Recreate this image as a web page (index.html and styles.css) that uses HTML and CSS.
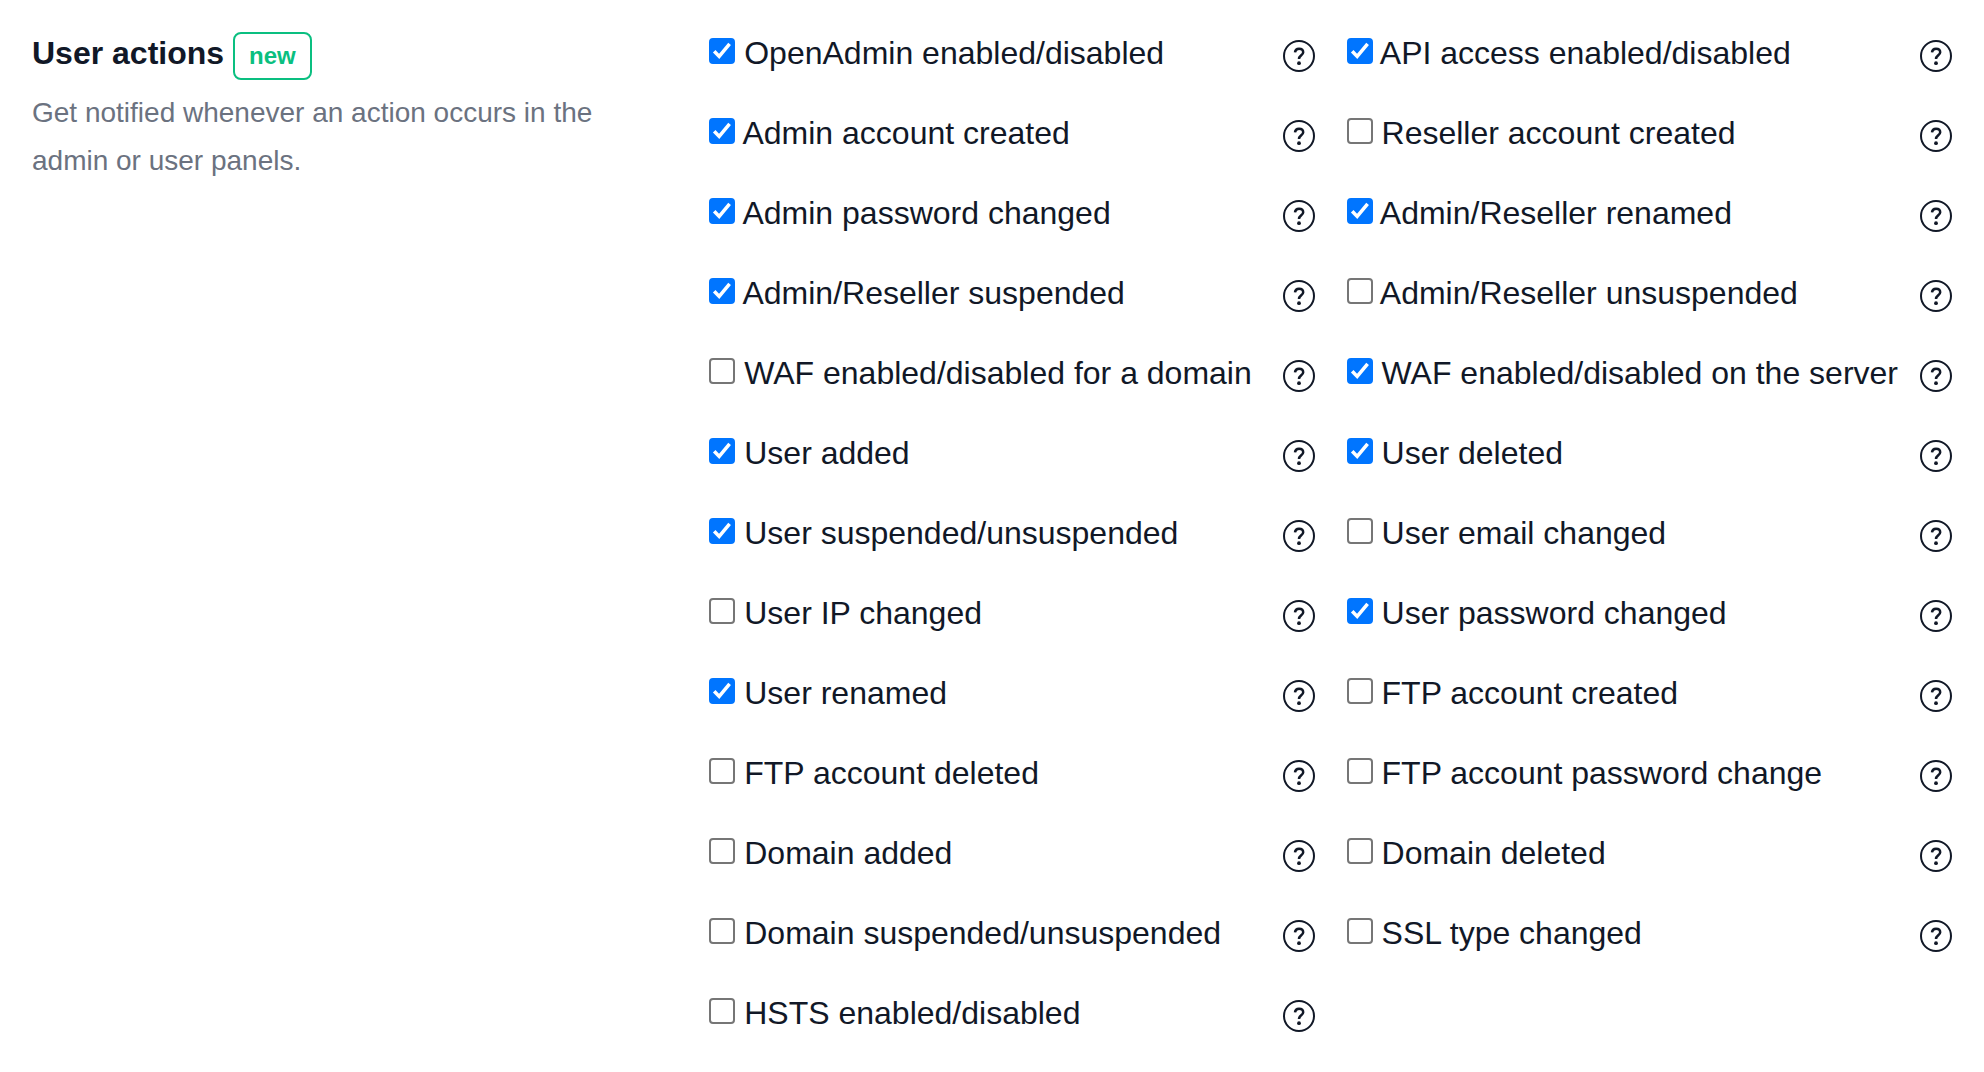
FILE: index.html
```html
<!DOCTYPE html>
<html lang="en">
<head>
<meta charset="utf-8">
<title>User actions</title>
<link rel="stylesheet" href="styles.css">
</head>
<body>
<svg class="sprite" aria-hidden="true">
  <symbol id="help" viewBox="0 0 32 32">
    <circle cx="16" cy="16" r="15" fill="none" stroke="currentColor" stroke-width="2"/>
    <path d="M12 12.400C12.200 10 13.800 8.700 16 8.700C18.400 8.700 20.200 10.100 20.200 12.300C20.200 15.300 16 15.400 16 19" fill="none" stroke="currentColor" stroke-width="2.500"/>
    <circle cx="16" cy="23.200" r="1.900" fill="currentColor"/>
  </symbol>
</svg>
<main class="settings">
  <header class="intro">
    <h2 class="title">User actions <span class="badge">new</span></h2>
    <p class="description">Get notified whenever an action occurs in the admin or user panels.</p>
  </header>
  <form class="options">
    <div class="option"><label><input type="checkbox" checked> OpenAdmin enabled/disabled</label><button type="button" class="help" aria-label="Help"><svg><use href="#help"/></svg></button></div>
    <div class="option"><label><input type="checkbox" checked> API access enabled/disabled</label><button type="button" class="help" aria-label="Help"><svg><use href="#help"/></svg></button></div>
    <div class="option"><label><input type="checkbox" checked> Admin account created</label><button type="button" class="help" aria-label="Help"><svg><use href="#help"/></svg></button></div>
    <div class="option"><label><input type="checkbox"> Reseller account created</label><button type="button" class="help" aria-label="Help"><svg><use href="#help"/></svg></button></div>
    <div class="option"><label><input type="checkbox" checked> Admin password changed</label><button type="button" class="help" aria-label="Help"><svg><use href="#help"/></svg></button></div>
    <div class="option"><label><input type="checkbox" checked> Admin/Reseller renamed</label><button type="button" class="help" aria-label="Help"><svg><use href="#help"/></svg></button></div>
    <div class="option"><label><input type="checkbox" checked> Admin/Reseller suspended</label><button type="button" class="help" aria-label="Help"><svg><use href="#help"/></svg></button></div>
    <div class="option"><label><input type="checkbox"> Admin/Reseller unsuspended</label><button type="button" class="help" aria-label="Help"><svg><use href="#help"/></svg></button></div>
    <div class="option"><label><input type="checkbox"> WAF enabled/disabled for a domain</label><button type="button" class="help" aria-label="Help"><svg><use href="#help"/></svg></button></div>
    <div class="option"><label><input type="checkbox" checked> WAF enabled/disabled on the server</label><button type="button" class="help" aria-label="Help"><svg><use href="#help"/></svg></button></div>
    <div class="option"><label><input type="checkbox" checked> User added</label><button type="button" class="help" aria-label="Help"><svg><use href="#help"/></svg></button></div>
    <div class="option"><label><input type="checkbox" checked> User deleted</label><button type="button" class="help" aria-label="Help"><svg><use href="#help"/></svg></button></div>
    <div class="option"><label><input type="checkbox" checked> User suspended/unsuspended</label><button type="button" class="help" aria-label="Help"><svg><use href="#help"/></svg></button></div>
    <div class="option"><label><input type="checkbox"> User email changed</label><button type="button" class="help" aria-label="Help"><svg><use href="#help"/></svg></button></div>
    <div class="option"><label><input type="checkbox"> User IP changed</label><button type="button" class="help" aria-label="Help"><svg><use href="#help"/></svg></button></div>
    <div class="option"><label><input type="checkbox" checked> User password changed</label><button type="button" class="help" aria-label="Help"><svg><use href="#help"/></svg></button></div>
    <div class="option"><label><input type="checkbox" checked> User renamed</label><button type="button" class="help" aria-label="Help"><svg><use href="#help"/></svg></button></div>
    <div class="option"><label><input type="checkbox"> FTP account created</label><button type="button" class="help" aria-label="Help"><svg><use href="#help"/></svg></button></div>
    <div class="option"><label><input type="checkbox"> FTP account deleted</label><button type="button" class="help" aria-label="Help"><svg><use href="#help"/></svg></button></div>
    <div class="option"><label><input type="checkbox"> FTP account password change</label><button type="button" class="help" aria-label="Help"><svg><use href="#help"/></svg></button></div>
    <div class="option"><label><input type="checkbox"> Domain added</label><button type="button" class="help" aria-label="Help"><svg><use href="#help"/></svg></button></div>
    <div class="option"><label><input type="checkbox"> Domain deleted</label><button type="button" class="help" aria-label="Help"><svg><use href="#help"/></svg></button></div>
    <div class="option"><label><input type="checkbox"> Domain suspended/unsuspended</label><button type="button" class="help" aria-label="Help"><svg><use href="#help"/></svg></button></div>
    <div class="option"><label><input type="checkbox"> SSL type changed</label><button type="button" class="help" aria-label="Help"><svg><use href="#help"/></svg></button></div>
    <div class="option"><label><input type="checkbox"> HSTS enabled/disabled</label><button type="button" class="help" aria-label="Help"><svg><use href="#help"/></svg></button></div>
  </form>
</main>
</body>
</html>
```
FILE: styles.css
```css
* {
  box-sizing: border-box;
}

body {
  margin: 0;
  background: #fff;
  color: #111827;
  font: 32px/42px "Liberation Sans", Arial, sans-serif;
}

.sprite {
  display: none;
}

.settings {
  display: grid;
  grid-template-columns: repeat(3, minmax(0, 1fr));
  column-gap: 112px;
  padding: 32px;
}

.title {
  margin: 0;
  font-size: 32px;
  font-weight: 700;
}

.badge {
  display: inline-block;
  padding: 6px 14px;
  border: 2px solid #0abf80;
  border-radius: 8px;
  color: #0abf80;
  font-size: 24px;
  line-height: 32px;
}

.description {
  margin: 9px 0 0;
  color: #6b7280;
  font-size: 28px;
  line-height: 48px;
}

.options {
  grid-column: span 2;
  display: grid;
  grid-template-columns: repeat(2, minmax(0, 1fr));
  gap: 32px;
}

.option {
  display: flex;
  justify-content: space-between;
  min-height: 48px;
}

.option input {
  appearance: none;
  width: 26px;
  height: 26px;
  margin: 0;
  border: 2px solid #767676;
  border-radius: 4px;
  background: #fff;
  vertical-align: baseline;
}

.option input:checked {
  border-color: #0075ff;
  background: #0075ff url("data:image/svg+xml,%3Csvg xmlns='http://www.w3.org/2000/svg' viewBox='0 0 26 26'%3E%3Cpath d='M5.200 13.200L10.200 18.400L20.600 5.800' fill='none' stroke='white' stroke-width='3.500'/%3E%3C/svg%3E") center / 26px 26px no-repeat border-box;
}

.help {
  display: flex;
  align-self: center;
  flex: none;
  padding: 0;
  border: 0;
  background: none;
  color: #111827;
}

.help svg {
  width: 32px;
  height: 32px;
}
```
